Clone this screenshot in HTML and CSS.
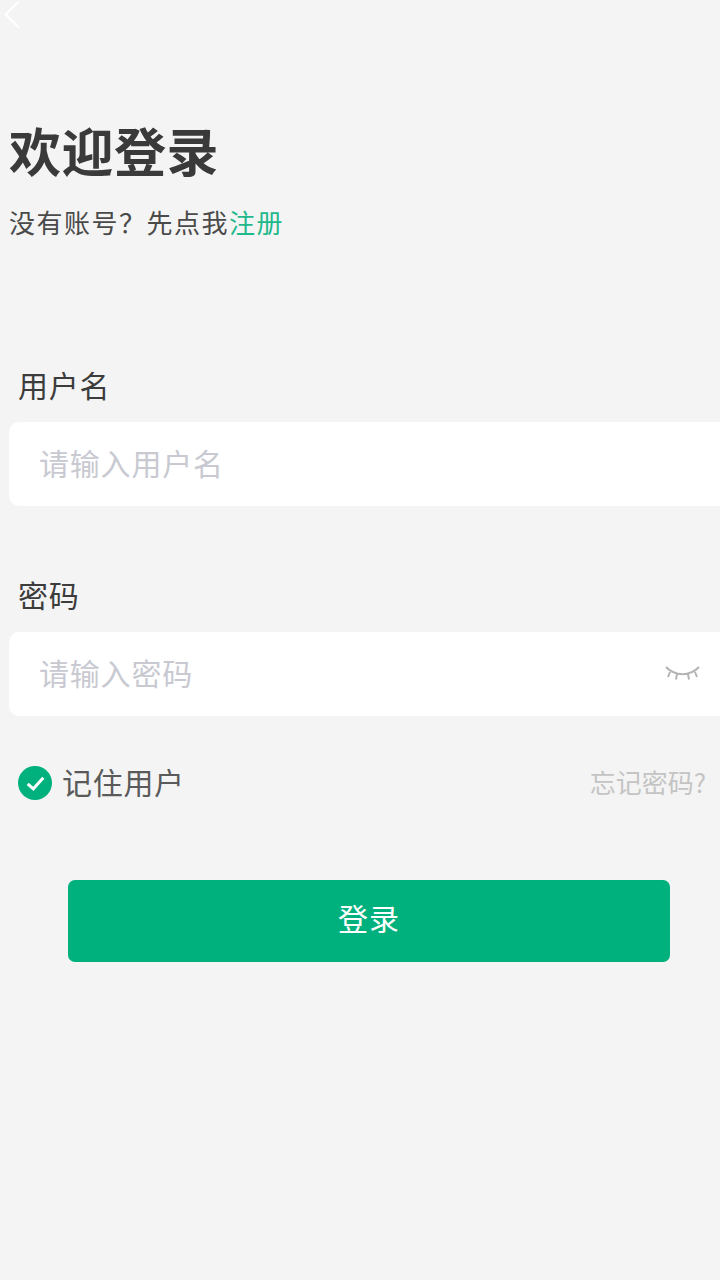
FILE: index.html
```html
<!DOCTYPE html>
<html lang="zh-CN">
<head>
    <meta charset="UTF-8">
    <meta name="viewport" content="width=device-width, initial-scale=1.0">
    <title>欢迎登录</title>
    <link rel="stylesheet" href="styles.css">
</head>
<body>
    <div class="back">
        <svg width="24" height="32" viewBox="0 0 24 32"><path d="M19 1.5 L5.5 14.5 L19 27.5" fill="none" stroke="#fff" stroke-width="2"/></svg>
    </div>

    <div class="head">
        <h1>欢迎登录</h1>
        <p>没有账号&#xFF1F;先点我<a href="#">注册</a></p>
    </div>

    <form class="login-form">
        <label class="field-label">用户名</label>
        <div class="field">
            <input type="text" placeholder="请输入用户名">
        </div>

        <label class="field-label field-label-pwd">密码</label>
        <div class="field">
            <input type="password" placeholder="请输入密码">
            <!-- closed eye -->
            <svg class="eye" width="36" height="20" viewBox="0 0 36 20">
                <path d="M1 3 C10 12.5 25 12.5 34 3 M5 8 L3 13 M12 10 L11 15.5 M23 10 L24 15.5 M30 8 L32 13" fill="none" stroke="#b4b4b4" stroke-width="2"/>
            </svg>
        </div>

        <div class="options">
            <span class="remember">
                <svg width="34" height="34" viewBox="0 0 34 34">
                    <circle cx="17" cy="17" r="17" fill="#00b17d"/>
                    <path d="M9.7 17.8 L15.3 22.8 L25.3 11.8" fill="none" stroke="#fff" stroke-width="3"/>
                </svg>
                <span class="remember-text">记住用户</span>
            </span>
            <a href="#" class="forgot">忘记密码?</a>
        </div>

        <button type="button" class="login-btn">登录</button>
    </form>
</body>
</html>
```

FILE: styles.css
```css
* { margin: 0; padding: 0; box-sizing: border-box; font-family: "Noto Sans CJK SC", "Liberation Sans", sans-serif; }
body {
    width: 720px;
    height: 1280px;
    background: #f4f4f4;
    overflow: hidden;
    color: #333;
}
.back { height: 32px; }
.back svg { display: block; }

.head { margin-top: 83px; padding-left: 9px; }
.head h1 { font-size: 52px; line-height: 70px; font-weight: 700; letter-spacing: 0.5px; color: #3a3a3a; }
.head p { margin-top: 17px; font-size: 26px; line-height: 40px; letter-spacing: 1.5px; color: #4a4a4a; }
.head a { color: #1fb98c; text-decoration: none; }

.login-form { margin-top: 120px; }
.field-label { display: block; padding-left: 18px; font-size: 30px; line-height: 44px; letter-spacing: 0.7px; color: #3c3c3c; }
.field-label-pwd { margin-top: 66px; }
.field {
    display: flex;
    align-items: center;
    width: 740px;
    height: 84px;
    margin: 16px 0 0 9px;
    padding: 0 48px 0 30px;
    background: #fff;
    border-radius: 10px;
}
.field input {
    flex: 1;
    min-width: 0;
    padding-bottom: 4px;
    border: none;
    outline: none;
    background: none;
    font-size: 30px;
    letter-spacing: 0.8px;
}
.field input::placeholder { color: #c8c9d1; opacity: 1; }
.eye { flex: none; }

.options {
    display: flex;
    justify-content: space-between;
    align-items: center;
    margin-top: 47px;
    padding: 0 14px 0 18px;
}
.remember { display: flex; align-items: center; gap: 10px; }
.remember-text { padding-bottom: 4px; font-size: 30px; line-height: 36px; letter-spacing: 0.7px; color: #5a5a5a; }
.forgot { padding-bottom: 2px; font-size: 26px; line-height: 38px; color: #c4c4c4; text-decoration: none; }

.login-btn {
    display: block;
    width: 602px;
    height: 82px;
    margin: 77px 0 0 68px;
    padding-bottom: 8px;
    border: none;
    border-radius: 7px;
    background: #00b17d;
    color: #fff;
    font-size: 30px;
    letter-spacing: 1px;
}
```
